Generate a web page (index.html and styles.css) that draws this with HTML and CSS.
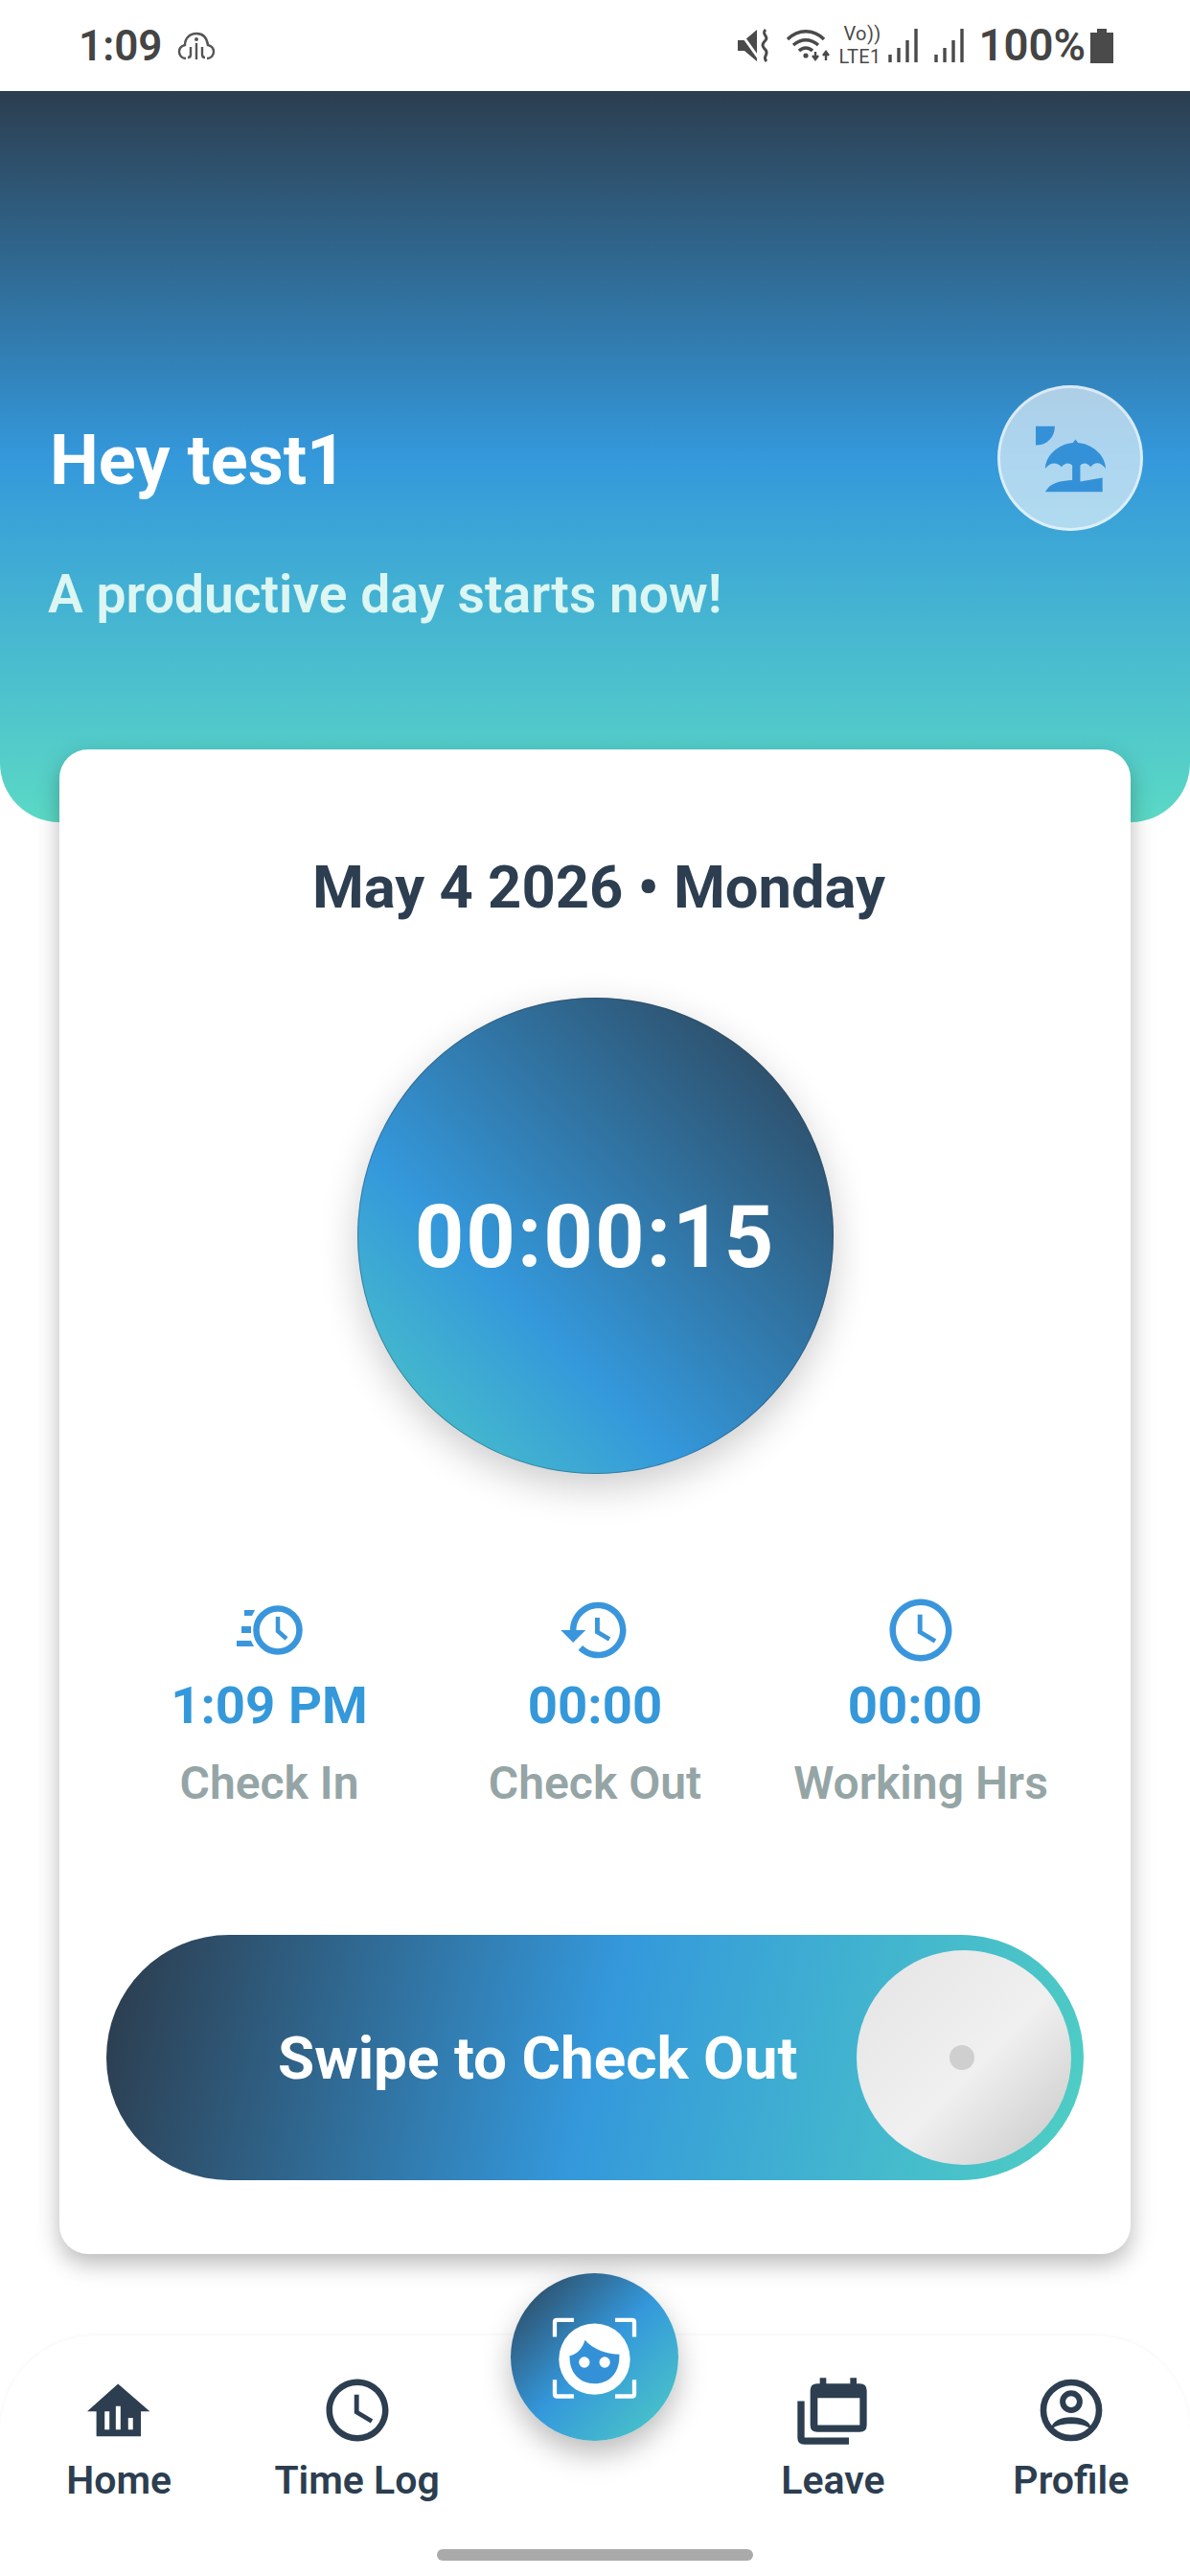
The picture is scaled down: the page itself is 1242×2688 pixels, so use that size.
FILE: index.html
```html
<!DOCTYPE html>
<html lang="en">
<head>
<meta charset="utf-8">
<title>Attendance</title>
<link rel="stylesheet" href="styles.css">
</head>
<body>
<div class="page">
  <div class="status">
    <div class="status-left">
      <span class="clock">1:09</span>
      <svg class="cloud" viewBox="0 0 40 30"><path d="M9 28c-4 0-7-3-7-7 0-3 2-6 6-7 0-7 5-12 12-12s11 5 12 12c4 1 6 4 6 7 0 4-3 7-7 7" fill="none" stroke="#555" stroke-width="2.4"/><path d="M20 12v17M14 16v8c0 2-1 3-3 3M26 16v8c0 2 1 3 3 3" fill="none" stroke="#555" stroke-width="2.4"/><circle cx="20" cy="8" r="2" fill="#555"/></svg>
    </div>
    <div class="status-right">
      <svg class="ic-mute" viewBox="0 0 35 35"><path d="M0 12h7L20 1v33L7 23H0z" fill="#4a4a4a"/><path d="M2 3l20 28" stroke="#fff" stroke-width="3"/><path d="M29 1c-5 5 4 7 0 11s-4 6 0 10c4 5-4 7 1 12" fill="none" stroke="#4a4a4a" stroke-width="3"/></svg>
      <svg class="ic-wifi" viewBox="0 0 46 35"><path d="M1 11C12 0 28 0 39 11M7 17c8-7 18-7 26 0M13 23c4-4 10-4 14 0" fill="none" stroke="#4a4a4a" stroke-width="3.4"/><circle cx="20" cy="28" r="2.6" fill="#4a4a4a"/><path d="M30 24v7M27 28l3 4 3-4M41 33v-8M38 28l3-4 3 4" fill="none" stroke="#4a4a4a" stroke-width="2.4"/></svg>
      <span class="volte"><span>Vo))</span><span>LTE1</span></span>
      <svg class="ic-signal" viewBox="0 0 32 35"><path d="M2 27v8M11 20v15M20 12v23M29 0v35" stroke="#4a4a4a" stroke-width="3.4"/></svg>
      <svg class="ic-signal sig-two" viewBox="0 0 32 35"><path d="M2 27v8M11 20v15M20 12v23M29 0v35" stroke="#4a4a4a" stroke-width="3.4"/></svg>
      <span class="battery-text">100%</span>
      <svg class="ic-battery" viewBox="0 0 24 36"><path d="M7 0h10v4h7v32H0V4h7z" fill="#4a4a4a"/></svg>
    </div>
  </div>

  <header class="hero">
    <div class="hero-row">
      <h1 class="greeting">Hey test1</h1>
      <div class="avatar">
        <svg class="avatar-icon" viewBox="180 150 230 220"><path d="M185 158h60c0 35-25 60-60 60z" fill="#3491d8"/><path d="M215 292c0-40 40-78 87-82l8-10 8 10c47 4 87 42 87 82-15-22-35-22-47-6-12-14-24-14-33-4v50l70-12v45H215c15-30 50-35 85-37v-46c-9-10-22-10-34 4-15-15-35-15-51 6z" fill="#3491d8"/></svg>
      </div>
    </div>
    <p class="tagline">A productive day starts now!</p>
  </header>

  <main class="card">
    <h2 class="date">May 4 2026 • Monday</h2>
    <div class="timer"><span>00:00:15</span></div>
    <div class="stats">
      <div class="stat">
        <div class="stat-icon">
          <svg class="ic-in" viewBox="0 0 69 52"><circle cx="43" cy="26" r="22.5" fill="none" stroke="#3a96dc" stroke-width="6.5"/><path d="M43 12v15l9 8" fill="none" stroke="#3a96dc" stroke-width="4.5"/><path d="M8 5h11l-3 6H8zM5 22h10v7H5zM0 37h15l3 6H0z" fill="#3a96dc"/></svg>
        </div>
        <div class="stat-value">1:09 PM</div>
        <div class="stat-label">Check In</div>
      </div>
      <div class="stat">
        <div class="stat-icon">
          <svg class="ic-24" viewBox="0 0 24 24"><path d="M13 3c-4.97 0-9 4.03-9 9H1l3.89 3.89.07.14L9 12H6c0-3.87 3.13-7 7-7s7 3.13 7 7-3.13 7-7 7c-1.93 0-3.68-.79-4.94-2.06l-1.42 1.42C8.27 19.99 10.51 21 13 21c4.97 0 9-4.03 9-9s-4.03-9-9-9zm-1 5v5l4.28 2.54.72-1.21-3.5-2.08V8H12z" fill="#3a96dc"/></svg>
        </div>
        <div class="stat-value">00:00</div>
        <div class="stat-label">Check Out</div>
      </div>
      <div class="stat stat-hours">
        <div class="stat-icon">
          <svg class="ic-24" viewBox="0 0 24 24"><path d="M11.99 2C6.47 2 2 6.48 2 12s4.47 10 9.99 10C17.52 22 22 17.52 22 12S17.52 2 11.99 2zM12 20c-4.42 0-8-3.58-8-8s3.58-8 8-8 8 3.58 8 8-3.58 8-8 8zM12.5 7H11v6l5.25 3.15.75-1.23-4.5-2.67z" fill="#3a96dc"/></svg>
        </div>
        <div class="stat-value">00:00</div>
        <div class="stat-label">Working Hrs</div>
      </div>
    </div>
    <div class="swipe">
      <span class="swipe-text">Swipe to Check Out</span>
      <div class="knob"><span class="knob-dot"></span></div>
    </div>
  </main>

  <nav class="nav">
    <div class="fab">
      <svg class="fab-icon" viewBox="160 155 280 270"><path d="M175 225v-46q0-7 7-7h53M365 172h53q7 0 7 7v46M175 360v45q0 7 7 7h53M365 412h53q7 0 7-7v-45" fill="none" stroke="#fff" stroke-width="13"/><circle cx="300" cy="295" r="112" fill="#fff"/><path d="M222 285c23-5 40-23 48-50 25 30 70 45 108 45 2 60-33 92-78 92s-80-32-78-87z" fill="#3491d8"/><circle cx="268" cy="305" r="17" fill="#fff"/><circle cx="332" cy="305" r="17" fill="#fff"/></svg>
    </div>
    <div class="nav-row">
      <div class="nav-item">
        <div class="nav-icon"><svg class="ic-home" viewBox="90 75 205 172"><path d="M190 78l100 87h-28v78H122v-78H93z" fill="#2c3e50"/><path d="M148 165h15v57h-15zM183 148h15v74h-15zM222 185h15v37h-15z" fill="#fff"/></svg></div>
        <span class="nav-label">Home</span>
      </div>
      <div class="nav-item">
        <div class="nav-icon"><svg class="ic-24" viewBox="0 0 24 24"><path d="M11.99 2C6.47 2 2 6.48 2 12s4.47 10 9.99 10C17.52 22 22 17.52 22 12S17.52 2 11.99 2zM12 20c-4.42 0-8-3.58-8-8s3.58-8 8-8 8 3.58 8 8-3.58 8-8 8zM12.5 7H11v6l5.25 3.15.75-1.23-4.5-2.67z" fill="#2c3e50"/></svg></div>
        <span class="nav-label">Time Log</span>
      </div>
      <div class="nav-item nav-spacer"></div>
      <div class="nav-item">
        <div class="nav-icon"><svg class="ic-leave" viewBox="145 50 240 230"><path d="M217 80h8V62h20v18h75V62h20v18h10q22 0 22 22v108q0 22-22 22H217q-22 0-22-22V102q0-22 22-22zm1 45v85h132v-85z" fill="#2c3e50" fill-rule="evenodd"/><path d="M166 135v115q0 10 10 10h140" fill="none" stroke="#2c3e50" stroke-width="22"/></svg></div>
        <span class="nav-label">Leave</span>
      </div>
      <div class="nav-item">
        <div class="nav-icon"><svg class="ic-profile" viewBox="905 65 206 200"><circle cx="1008" cy="165" r="88" fill="none" stroke="#2c3e50" stroke-width="20"/><circle cx="1008" cy="138" r="27" fill="none" stroke="#2c3e50" stroke-width="18"/><path d="M945 225c0-25 30-38 63-38s63 13 63 38c-15-12-38-17-63-17s-48 5-63 17z" fill="#2c3e50"/></svg></div>
        <span class="nav-label">Profile</span>
      </div>
    </div>
    <div class="handle"></div>
  </nav>
</div>
</body>
</html>
```
FILE: styles.css
```css
* { box-sizing: border-box; }
html, body { margin: 0; padding: 0; background: #fff; }
body { font-family: Roboto, "Liberation Sans", sans-serif; }
.page { width: 1242px; height: 2688px; overflow: hidden; display: flex; flex-direction: column; background: #fff; }

.status { height: 95px; flex: none; display: flex; align-items: center; justify-content: space-between; padding: 0 80px 0 82px; color: #444; }
.status-left { display: flex; align-items: center; gap: 16px; }
.clock { font-size: 44px; font-weight: 600; line-height: 1; }
.cloud { width: 40px; height: 30px; }
.status-right { display: flex; align-items: center; }
.ic-mute { width: 35px; height: 35px; }
.ic-wifi { width: 50px; height: 35px; margin-left: 14px; }
.volte { display: flex; flex-direction: column; margin-left: 6px; width: 46px; font-size: 20px; line-height: 23.5px; font-weight: 400; letter-spacing: 0.4px; color: #4a4a4a; }
.volte span:first-child { padding-left: 5px; }
.ic-signal { width: 32px; height: 35px; margin-left: 6px; }
.sig-two { margin-left: 16px; }
.battery-text { font-size: 45.5px; font-weight: 600; line-height: 1; margin-left: 14px; }
.ic-battery { width: 24px; height: 36px; margin-left: 5px; }

.hero { height: 763px; flex: none; padding: 307px 49px 0 50px; border-radius: 0 0 62px 62px; background: linear-gradient(180deg, #2c3e50 0%, #3498db 50%, #5bd9c5 100%); }
.hero-row { display: flex; align-items: center; justify-content: space-between; height: 152px; }
.greeting { margin: 6px 0 0 2px; font-size: 72px; font-weight: 700; line-height: 1; color: #fff; }
.avatar { width: 152px; height: 152px; flex: none; display: flex; align-items: center; justify-content: center; border-radius: 50%; background: rgba(255, 255, 255, 0.6); border: 3px solid rgba(255, 255, 255, 0.55); }
.avatar-icon { width: 77px; height: 73px; }
.tagline { margin: 34px 0 0; font-size: 55.2px; font-weight: 600; line-height: 64px; color: #dcf6f3; }

.card { flex: none; height: 1570px; margin: -76px 62px 0; padding: 104px 49px 0; display: flex; flex-direction: column; align-items: center; background: #fff; border-radius: 30px; box-shadow: 0 10px 24px rgba(0, 0, 0, 0.28); position: relative; }
.date { margin: 0; padding-left: 8px; font-size: 61.5px; font-weight: 700; line-height: 80px; color: #2c3e50; }
.timer { width: 497px; height: 497px; flex: none; margin-top: 75px; padding-top: 4px; display: flex; align-items: center; justify-content: center; border-radius: 50%; background: linear-gradient(45deg, #4ecdc4 0%, #3498db 35%, #2c3e50 100%); box-shadow: inset 0 0 0 1px rgba(44, 62, 80, 0.4), 0 14px 40px rgba(0, 0, 0, 0.2); }
.timer span { font-size: 90px; font-weight: 700; line-height: 1; letter-spacing: 2px; color: #fff; }

.stats { align-self: stretch; display: grid; grid-template-columns: repeat(3, 1fr); margin-top: 124px; }
.stat { display: flex; flex-direction: column; align-items: center; }
.stat-icon { height: 78px; display: flex; align-items: center; justify-content: center; }
.ic-in { width: 69px; height: 52px; }
.ic-24 { width: 78px; height: 78px; display: block; }
.stat-value { margin-top: 4px; font-size: 54.5px; font-weight: 700; line-height: 70px; color: #3498db; }
.stat-hours .stat-value { margin-right: 12px; }
.stat-label { margin-top: 17px; font-size: 48px; font-weight: 600; line-height: 60px; color: #95a5a6; }

.swipe { align-self: stretch; height: 256px; margin-top: 128px; display: flex; align-items: center; justify-content: space-between; padding: 0 13px 0 179px; border-radius: 128px; background: linear-gradient(104deg, #2c3e50 2%, #3498db 50%, #4ecdc4 98%); }
.swipe-text { font-size: 62px; font-weight: 700; color: #fff; white-space: nowrap; }
.knob { width: 224px; height: 224px; flex: none; display: flex; align-items: center; justify-content: center; border-radius: 50%; background: linear-gradient(135deg, #e4e4e4 0%, #f0f0f0 55%, #c6c6c6 100%); }
.knob-dot { width: 26px; height: 26px; margin: 0 4px 0 0; border-radius: 50%; background: #cfcfcf; }

.nav { flex: none; height: 251px; margin-top: 85px; position: relative; padding-top: 39px; border-radius: 100px 100px 0 0; background: #fff; box-shadow: 0 -1px 4px rgba(0, 0, 0, 0.04); }
.fab { position: absolute; left: 533px; top: -65px; width: 175px; height: 175px; display: flex; align-items: center; justify-content: center; border-radius: 50%; background: linear-gradient(135deg, #2c3e50 0%, #3498db 50%, #4ecdc4 100%); box-shadow: 0 14px 30px rgba(0, 0, 0, 0.26); }
.fab-icon { width: 93px; height: 90px; }
.nav-row { display: grid; grid-template-columns: repeat(5, 1fr); }
.nav-item { display: flex; flex-direction: column; align-items: center; }
.nav-icon { height: 78px; display: flex; align-items: center; justify-content: center; }
.ic-home { width: 68px; height: 58px; }
.ic-leave { width: 80px; height: 77px; }
.ic-profile { width: 68px; height: 66px; }
.nav-label { margin-top: 9px; font-size: 41px; font-weight: 600; line-height: 50px; color: #2c3e50; white-space: nowrap; }
.handle { width: 330px; height: 12px; margin: 47px auto 0; border-radius: 6px; background: #aaa; }
```
